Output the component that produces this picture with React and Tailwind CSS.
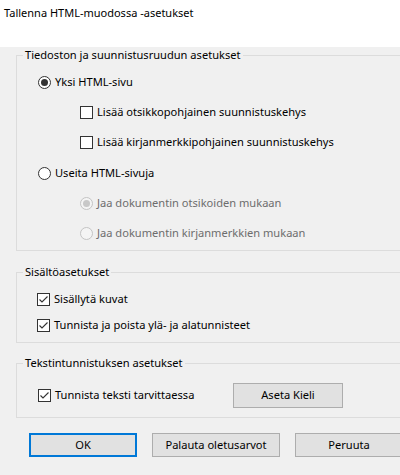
import React from "react";

const font = { fontFamily: '"Noto Sans", "Open Sans", sans-serif' };

function Radio({ checked, disabled }) {
  return (
    <span
      className={`w-[13px] h-[13px] rounded-full border flex items-center justify-center shrink-0 ${
        disabled ? "border-[#c4c4c4] bg-[#f4f4f4]" : "border-[#333333] bg-white"
      }`}
    >
      {checked && (
        <span className={`w-[7px] h-[7px] rounded-full ${disabled ? "bg-[#c8c8c8]" : "bg-[#333333]"}`} />
      )}
    </span>
  );
}

function Check({ checked }) {
  return (
    <span className="w-[13px] h-[13px] border border-[#333333] bg-white flex items-center justify-center shrink-0">
      {checked && (
        <svg width="11" height="11" viewBox="0 0 11 11">
          <path d="M1.5 5.5 L4 8 L9.5 2.5" fill="none" stroke="#333333" strokeWidth="1.1" />
        </svg>
      )}
    </span>
  );
}

function Row({ h, indent, children }) {
  return (
    <div className={`flex items-center gap-[4px] ${h} ${indent}`}>{children}</div>
  );
}

function Btn({ w, h = "h-[24px]", primary, children }) {
  return (
    <div
      className={`${w} ${h} shrink-0 flex items-center justify-center bg-[#e1e1e1] text-black ${
        primary ? "border-2 border-[#0078d7]" : "border border-[#adadad]"
      }`}
    >
      {children}
    </div>
  );
}

export default function App() {
  return (
    <div className="w-[400px] h-[475px] overflow-hidden bg-white text-[11.1px] text-black" style={font}>
      <div className="h-[30px] bg-white flex items-center pl-[4px] pb-[4px] text-[11px]">
        Tallenna HTML-muodossa -asetukset
      </div>
      <div className="h-[443px] w-[440px] bg-[#f0f0f0] block">
        <fieldset className="block mt-[17px] ml-[16px] w-[420px] min-w-[420px] border border-r-0 border-[#dcdcdc] pt-0 pb-[2px] px-0">
          <legend className="ml-[6px] px-[2px] leading-[16px]">Tiedoston ja suunnistusruudun asetukset</legend>
          <div className="pt-[4px] pl-[21px]">
            <Row h="h-[30px]" indent="">
              <Radio checked />
              <span>Yksi HTML-sivu</span>
            </Row>
            <Row h="h-[30px]" indent="pl-[42px]">
              <Check />
              <span>Lisää otsikkopohjainen suunnistuskehys</span>
            </Row>
            <Row h="h-[31px]" indent="pl-[42px]">
              <Check />
              <span>Lisää kirjanmerkkipohjainen suunnistuskehys</span>
            </Row>
            <Row h="h-[30px]" indent="">
              <Radio />
              <span>Useita HTML-sivuja</span>
            </Row>
            <Row h="h-[30px]" indent="pl-[42px]">
              <Radio checked disabled />
              <span className="text-[#6d6d6d]">Jaa dokumentin otsikoiden mukaan</span>
            </Row>
            <Row h="h-[30px]" indent="pl-[42px]">
              <Radio disabled />
              <span className="text-[#6d6d6d]">Jaa dokumentin kirjanmerkkien mukaan</span>
            </Row>
          </div>
        </fieldset>

        <fieldset className="block mt-[13px] ml-[16px] w-[420px] min-w-[420px] border border-r-0 border-[#dcdcdc] pt-0 pb-[4px] px-0">
          <legend className="ml-[6px] px-[2px] leading-[16px]">Sisältöasetukset</legend>
          <div className="pt-[6px] pl-[20px]">
            <Row h="h-[26px]" indent="">
              <Check checked />
              <span>Sisällytä kuvat</span>
            </Row>
            <Row h="h-[26px]" indent="">
              <Check checked />
              <span>Tunnista ja poista ylä- ja alatunnisteet</span>
            </Row>
          </div>
        </fieldset>

        <fieldset className="block mt-[12px] ml-[16px] w-[420px] min-w-[420px] border border-r-0 border-[#dcdcdc] pt-0 pb-[9px] px-0">
          <legend className="ml-[6px] px-[2px] leading-[16px]">Tekstintunnistuksen asetukset</legend>
          <div className="pt-[12px] pl-[21px] h-[37px] flex items-end">
            <div className="h-[25px] flex items-center">
              <div className="w-[195px] flex items-center gap-[4px]">
                <Check checked />
                <span>Tunnista teksti tarvittaessa</span>
              </div>
              <Btn w="w-[110px]" h="h-[25px]">Aseta Kieli</Btn>
            </div>
          </div>
        </fieldset>

        <div className="mt-[15px] ml-[29px] flex gap-[15px]">
          <Btn w="w-[108px]" primary>OK</Btn>
          <Btn w="w-[128px]">Palauta oletusarvot</Btn>
          <Btn w="w-[108px]">Peruuta</Btn>
        </div>
      </div>
    </div>
  );
}
